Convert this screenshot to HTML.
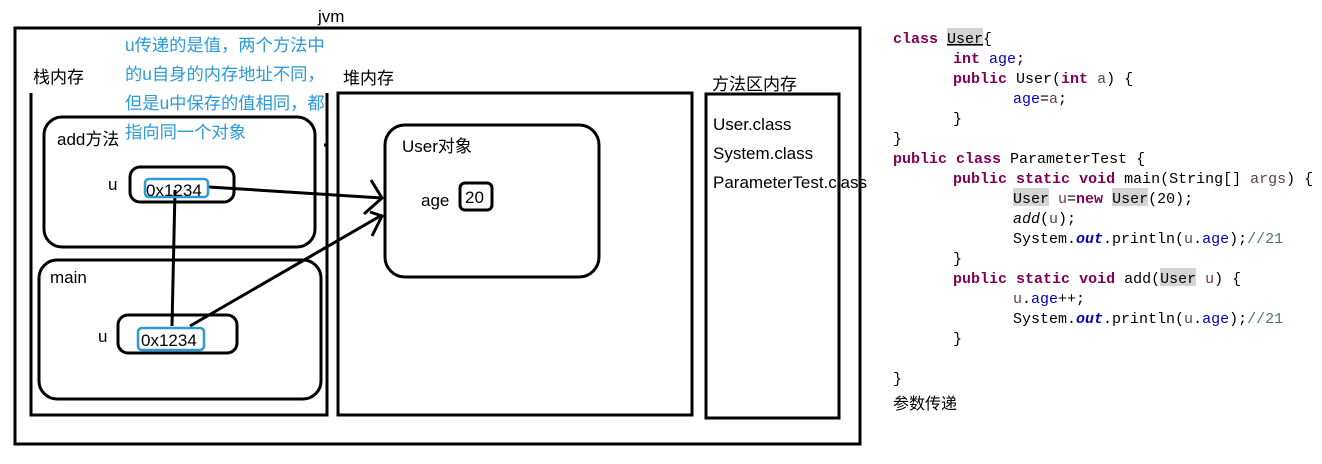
<!DOCTYPE html>
<html><head><meta charset="utf-8"><style>
body{margin:0;background:#fff;width:1322px;height:464px;overflow:hidden}
svg{position:absolute;left:0;top:0}
.t{font-family:"Liberation Sans","Noto Sans CJK SC",sans-serif;font-size:17px;fill:#000}
.b{font-family:"Liberation Sans","Noto Sans CJK SC",sans-serif;font-size:17.3px;fill:#2b9ad6}
.c{font-family:"Liberation Mono","Noto Sans CJK SC",monospace;font-size:15px;fill:#000}
.k{fill:#7f0055;font-weight:bold}
.v{fill:#0000c0}
.p{fill:#6a3e3e}
.g{fill:#3f7f5f}
.o{fill:#0000c0;font-weight:bold;font-style:italic}
</style></head><body>
<svg width="1322" height="464" xmlns="http://www.w3.org/2000/svg">
<g fill="none" stroke="#000" stroke-width="3">
<rect x="15" y="28" width="845" height="416"/>
<polyline points="31,93 31,415 327,415 327,93"/>
<rect x="338" y="93" width="354" height="322"/>
<rect x="706" y="94" width="133" height="324"/>
<rect x="44" y="117" width="271" height="130" rx="18"/>
<rect x="39" y="260" width="282" height="139" rx="18"/>
<rect x="130" y="167" width="104" height="35" rx="10"/>
<rect x="118" y="315" width="119" height="38" rx="10"/>
<rect x="385" y="125" width="214" height="152" rx="20"/>
<rect x="460" y="183" width="32" height="27" rx="5"/>
<line x1="324" y1="145" x2="326" y2="145"/>
<line x1="209" y1="187" x2="382" y2="198"/>
<polyline points="371,180 382,198 364,214"/>
<line x1="175" y1="190" x2="172" y2="326"/>
<line x1="190" y1="326" x2="382" y2="215"/>
<polyline points="370,212 382,216 372,236"/>
</g>
<g fill="none" stroke="#2b9ad6" stroke-width="2.5">
<rect x="145" y="179" width="63" height="18" rx="4"/>
<rect x="138" y="328" width="66" height="22" rx="4"/>
</g>
<text class="t" x="318" y="22">jvm</text>
<text class="t" x="33" y="83">栈内存</text>
<text class="t" x="343" y="84">堆内存</text>
<text class="t" x="712" y="90">方法区内存</text>
<text class="b" x="125" y="51">u传递的是值，两个方法中</text>
<text class="b" x="125" y="80">的u自身的内存地址不同，</text>
<text class="b" x="125" y="109">但是u中保存的值相同，都</text>
<text class="b" x="125" y="138">指向同一个对象</text>
<text class="t" x="57" y="145">add方法</text>
<text class="t" x="108" y="190">u</text>
<text class="t" x="146" y="196">0x1234</text>
<text class="t" x="50" y="283">main</text>
<text class="t" x="98" y="342">u</text>
<text class="t" x="141" y="346">0x1234</text>
<text class="t" x="402" y="152">User对象</text>
<text class="t" x="421" y="206">age</text>
<text class="t" x="465" y="203">20</text>
<text class="t" x="713" y="130">User.class</text>
<text class="t" x="713" y="159">System.class</text>
<text class="t" x="713" y="188">ParameterTest.class</text>
<rect x="947" y="28" width="36" height="18" fill="#d4d4d4"/>
<rect x="1013" y="188" width="36" height="18" fill="#d4d4d4"/>
<rect x="1112" y="188" width="36" height="18" fill="#d4d4d4"/>
<rect x="1160" y="268" width="36" height="18" fill="#d4d4d4"/>
<text class="c" x="893" y="43"><tspan class="k">class</tspan> <tspan text-decoration="underline">User</tspan>{</text>
<text class="c" x="953" y="63"><tspan class="k">int</tspan> <tspan class="v">age</tspan>;</text>
<text class="c" x="953" y="83"><tspan class="k">public</tspan> User(<tspan class="k">int</tspan> <tspan class="p">a</tspan>) {</text>
<text class="c" x="1013" y="103"><tspan class="v">age</tspan>=<tspan class="p">a</tspan>;</text>
<text class="c" x="953" y="123">}</text>
<text class="c" x="893" y="143">}</text>
<text class="c" x="893" y="163"><tspan class="k">public</tspan> <tspan class="k">class</tspan> ParameterTest {</text>
<text class="c" x="953" y="183"><tspan class="k">public</tspan> <tspan class="k">static</tspan> <tspan class="k">void</tspan> main(String[] <tspan class="p">args</tspan>) {</text>
<text class="c" x="1013" y="203">User <tspan class="p">u</tspan>=<tspan class="k">new</tspan> User(20);</text>
<text class="c" x="1013" y="223"><tspan font-style="italic">add</tspan>(<tspan class="p">u</tspan>);</text>
<text class="c" x="1013" y="243">System.<tspan class="o">out</tspan>.println(<tspan class="p">u</tspan>.<tspan class="v">age</tspan>);<tspan class="g">//21</tspan></text>
<text class="c" x="953" y="263">}</text>
<text class="c" x="953" y="283"><tspan class="k">public</tspan> <tspan class="k">static</tspan> <tspan class="k">void</tspan> add(User <tspan class="p">u</tspan>) {</text>
<text class="c" x="1013" y="303"><tspan class="p">u</tspan>.<tspan class="v">age</tspan>++;</text>
<text class="c" x="1013" y="323">System.<tspan class="o">out</tspan>.println(<tspan class="p">u</tspan>.<tspan class="v">age</tspan>);<tspan class="g">//21</tspan></text>
<text class="c" x="953" y="343">}</text>
<text class="c" x="893" y="383">}</text>
<text class="t" x="893" y="409" style="font-size:16px">参数传递</text>
</svg>
</body></html>
